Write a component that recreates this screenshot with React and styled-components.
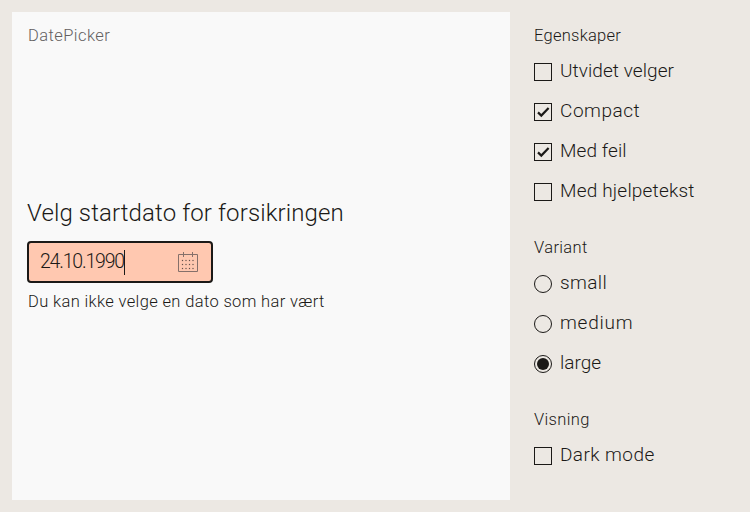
import React from "react";
import styled, { createGlobalStyle } from "styled-components";

const ink = "#1b1917";

const GlobalStyle = createGlobalStyle`
  * { box-sizing: border-box; }
  body { margin: 0; background: #ece8e3; }
`;

const Page = styled.div`
  display: flex;
  height: 512px;
  padding: 12px;
  gap: 24px;
  overflow: hidden;
  background: #ece8e3;
  color: ${ink};
  font-family: Roboto, "Open Sans", sans-serif;
  font-weight: 300;
`;

const Preview = styled.main`
  width: 498px;
  height: 488px;
  padding: 11px 16px;
  background: #f9f9f9;
`;

const ExampleName = styled.div`
  height: 24px;
  font-size: 16.5px;
  line-height: 26px;
  letter-spacing: 0.43px;
  color: #636060;
`;

const Field = styled.div`
  display: flex;
  flex-direction: column;
  margin: 149px 0 0 -1px;
`;

const FieldLabel = styled.label`
  height: 32px;
  margin-bottom: 13px;
  font-size: 24px;
  line-height: 34px;
  letter-spacing: 0.12px;
  white-space: nowrap;
`;

const DateBox = styled.div`
  display: flex;
  align-items: center;
  width: 186px;
  height: 42px;
  padding: 0 12px 0 11px;
  border: 2px solid ${ink};
  border-radius: 4px;
  background: #ffc8b0;
`;

const DateValue = styled.span`
  width: 84px;
  white-space: nowrap;
  font-size: 19.5px;
  line-height: 24px;
  letter-spacing: -1.2px;
`;

const Caret = styled.span`
  width: 1px;
  height: 25px;
  background: ${ink};
`;

const CalendarSvg = styled.svg`
  width: 22px;
  height: 22px;
  margin-left: auto;
  flex: none;
`;

const ErrorText = styled.div`
  margin: 7px 0 0 1px;
  font-size: 16.5px;
  line-height: 24px;
  letter-spacing: 0.36px;
  white-space: nowrap;
`;

const Controls = styled.aside`
  display: flex;
  flex-direction: column;
  gap: 28px;
  padding-top: 11px;
`;

const Group = styled.div`
  display: flex;
  flex-direction: column;
`;

const GroupTitle = styled.div`
  height: 24px;
  font-size: 16.5px;
  line-height: 26px;
  letter-spacing: ${(p) => p.$track}px;
`;

const Option = styled.label`
  display: flex;
  gap: 8px;
  height: 40px;
  padding-top: 16px;
`;

const OptionText = styled.span`
  margin-top: -5px;
  height: 26px;
  font-size: 19px;
  line-height: 26px;
  white-space: nowrap;
  letter-spacing: ${(p) => p.$track}px;
`;

const Checkbox = styled.span`
  display: block;
  flex: none;
  width: 18px;
  height: 18px;
  border: 1px solid ${ink};
  svg { display: block; width: 16px; height: 16px; }
`;

const Radio = styled.span`
  display: grid;
  place-items: center;
  flex: none;
  width: 18px;
  height: 18px;
  border: 1px solid ${ink};
  border-radius: 50%;
`;

const RadioDot = styled.span`
  width: 12px;
  height: 12px;
  border-radius: 50%;
  background: ${ink};
`;

const groups = [
  {
    title: "Egenskaper",
    track: 0.26,
    type: "checkbox",
    options: [
      { label: "Utvidet velger", track: 0.07 },
      { label: "Compact", track: 0.54, on: true },
      { label: "Med feil", track: 0.1, on: true },
      { label: "Med hjelpetekst", track: 0.19 },
    ],
  },
  {
    title: "Variant",
    track: 0.36,
    type: "radio",
    options: [
      { label: "small", track: 0.4 },
      { label: "medium", track: 0.77 },
      { label: "large", track: 0, on: true },
    ],
  },
  {
    title: "Visning",
    track: 0.34,
    type: "checkbox",
    options: [{ label: "Dark mode", track: 0.42 }],
  },
];

function CalendarIcon() {
  const dots = [];
  for (const y of [9.5, 13.5, 17.5])
    for (const x of [5.5, 9, 12.5, 16]) dots.push([x, y]);
  return (
    <CalendarSvg viewBox="0 0 22 22" fill="none" stroke="#85706a">
      <path d="M1.5 3.5h19v17h-19zM6.5 1v5M15.5 1v5" />
      {dots.map(([x, y]) => (
        <rect key={`${x}-${y}`} x={x - 0.6} y={y - 0.6} width="1.2" height="1.2" fill="#65524b" stroke="none" />
      ))}
    </CalendarSvg>
  );
}

function Mark({ type, on }) {
  if (type === "radio") return <Radio>{on && <RadioDot />}</Radio>;
  return (
    <Checkbox>
      {on && (
        <svg viewBox="0 0 16 16" fill="none" stroke={ink} strokeWidth="2.2">
          <path d="M3 8.4 6.3 11.6 13.6 4.1" />
        </svg>
      )}
    </Checkbox>
  );
}

export default function App() {
  return (
    <Page>
      <GlobalStyle />
      <Preview>
        <ExampleName>DatePicker</ExampleName>
        <Field>
          <FieldLabel>Velg startdato for forsikringen</FieldLabel>
          <DateBox>
            <DateValue>24.10.1990</DateValue>
            <Caret />
            <CalendarIcon />
          </DateBox>
          <ErrorText>Du kan ikke velge en dato som har vært</ErrorText>
        </Field>
      </Preview>
      <Controls>
        {groups.map((g) => (
          <Group key={g.title}>
            <GroupTitle $track={g.track}>{g.title}</GroupTitle>
            {g.options.map((o) => (
              <Option key={o.label}>
                <Mark type={g.type} on={o.on} />
                <OptionText $track={o.track}>{o.label}</OptionText>
              </Option>
            ))}
          </Group>
        ))}
      </Controls>
    </Page>
  );
}
